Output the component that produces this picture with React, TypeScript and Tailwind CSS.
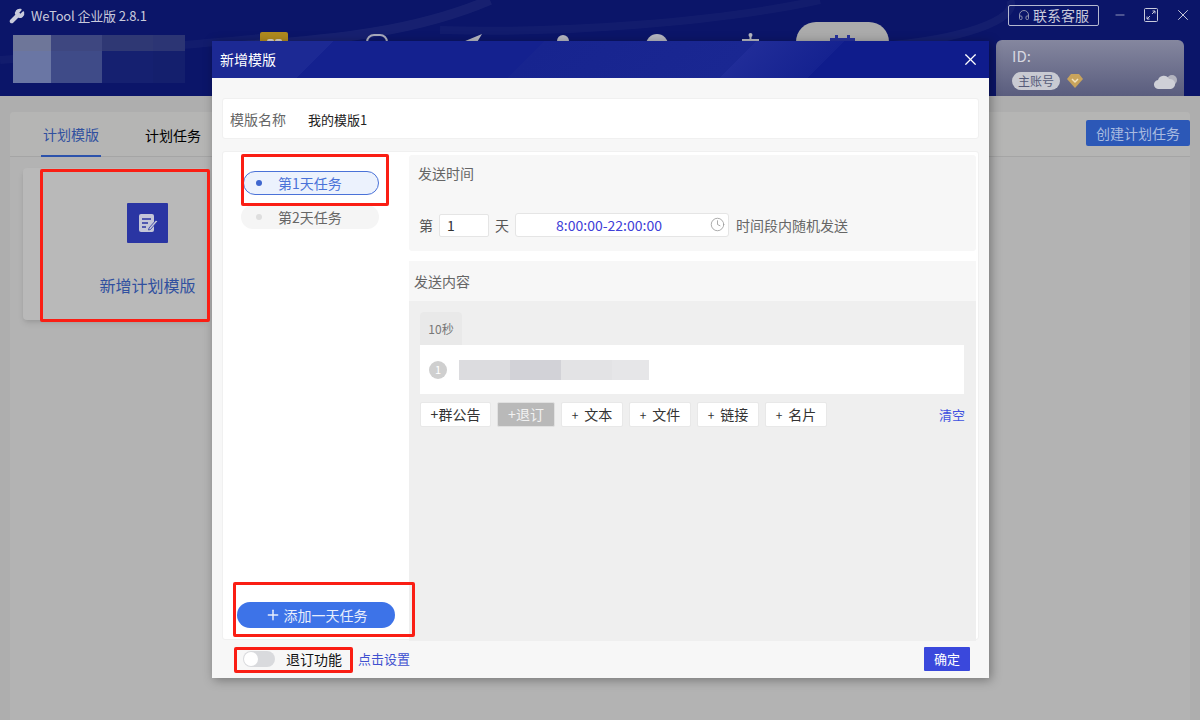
import React from "react";
import { Wrench, X, Minus, Headphones, Plus, Clock } from "lucide-react";

const btns = ["文本", "文件", "链接", "名片"];

function RedBox({ className }: { className: string }) {
  return <div className={`absolute border-[3px] border-[#fa1e14] rounded-[2px] pointer-events-none ${className}`} />;
}

function Waves() {
  return (
    <svg className="absolute inset-0" width="1200" height="96" viewBox="0 0 1200 96" fill="none">
      <path d="M240 46C340 40 420 30 490 0" stroke="#fff" strokeOpacity=".05" strokeWidth="10" />
      <path d="M440 30C560 34 720 22 820 0" stroke="#fff" strokeOpacity=".03" strokeWidth="8" />
      <path d="M880 46C960 40 1020 20 1010 0" stroke="#fff" strokeOpacity=".04" strokeWidth="8" />
      <path d="M0 60C120 50 200 44 260 38" stroke="#fff" strokeOpacity=".03" strokeWidth="8" />
    </svg>
  );
}

function NavIcons() {
  return (
    <div className="absolute left-[260px] top-[22px] flex items-start">
      <div className="mt-[10px] w-[28px] h-[26px] bg-[#b08a1e] rounded-[2px] flex justify-center gap-[1px] pt-[7px]">
        <span className="w-[7px] h-[6px] bg-[#d9d3c2] rounded-t-[2px]" />
        <span className="w-[7px] h-[6px] bg-[#d9d3c2] rounded-t-[2px]" />
      </div>
      <div className="ml-[78px] mt-[12px] w-[22px] h-[24px] border-2 border-[#a9abbd] rounded-[8px]" />
      <svg className="ml-[76px] mt-[12px]" width="18" height="18" viewBox="0 0 18 18"><path d="M18 0L0 7.500l5 3 3 6z" fill="#b5b6bf" /></svg>
      <svg className="ml-[75px] mt-[13px]" width="12" height="22" viewBox="0 0 12 22"><circle cx="6" cy="6" r="6" fill="#b5b6bf" /></svg>
      <svg className="ml-[77px] mt-[12px]" width="22" height="22" viewBox="0 0 22 22"><circle cx="11" cy="11" r="11" fill="#b5b6bf" /></svg>
      <svg className="ml-[74px] mt-[11px]" width="17" height="22" viewBox="0 0 17 22"><circle cx="8.500" cy="2" r="2" fill="#b5b6bf" /><path d="M7.500 3h2v4h-2z" fill="#b5b6bf" /><path d="M0 6h17v10H0z" fill="#b5b6bf" /></svg>
      <div className="ml-[37px] w-[93px] h-[40px] bg-[#ababab] rounded-t-[20px] flex justify-center pt-[13px]">
        <svg width="25" height="24" viewBox="0 0 25 24"><path d="M5 0h3v3h9V0h3v3h5v21H0V3h5z" fill="#27329c" /></svg>
      </div>
    </div>
  );
}

function Header() {
  return (
    <div className="relative h-[96px] bg-[#0b1569] shrink-0 overflow-hidden">
      <Waves />
      <div className="relative flex items-center h-[32px] pl-[9px] pr-[8px]">
        <Wrench className="w-[16px] h-[16px] text-[#c9cbdc]" fill="#c9cbdc" />
        <span className="ml-[6px] text-[13px] tracking-[-0.15px] text-[#c9cbdc]">WeTool 企业版 2.8.1</span>
        <div className="ml-auto flex items-center -mt-[2px]">
          <div className="w-[91px] h-[21px] border border-[#b5b8cf] rounded-[2px] flex items-center justify-center gap-[3px] text-[14px] text-[#c9cbdc]">
            <Headphones className="w-[12px] h-[12px] text-[#8f93b0]" />联系客服
          </div>
          <Minus className="ml-[14px] w-[14px] h-[14px] text-[#c9cbdc]" strokeWidth={1.2} />
          <svg className="ml-[17px]" width="14" height="14" viewBox="0 0 14 14" fill="none" stroke="#c9cbdc">
            <rect x=".5" y=".5" width="13" height="13" rx="1" />
            <path d="M3 11l3-3M3 8.500V11h2.500M11 3L8 6M8.500 3H11v2.500" />
          </svg>
          <X className="ml-[16px] w-[18px] h-[18px] text-[#c9cbdc]" strokeWidth={1.3} />
        </div>
      </div>
      <div className="absolute left-[13px] top-[35px] w-[172px] h-[48px] grid grid-cols-[38px_51px_51px_32px] grid-rows-[16px_32px]">
        <div className="bg-[#6e7699]" /><div className="bg-[#3e4780]" /><div className="bg-[#2f3874]" /><div className="bg-[#2c3574]" />
        <div className="bg-[#6a76a4]" /><div className="bg-[#3f4b88]" /><div className="bg-[#152070]" /><div className="bg-[#141f6d]" />
      </div>
      <NavIcons />
      <div className="absolute left-[996px] top-[40px] w-[188px] h-[56px] bg-gradient-to-b from-[#85879f] to-[#5a5d7e] rounded-t-[6px] text-[#d6d7e0]">
        <div className="absolute left-[16px] top-[5px] text-[15px]">ID:</div>
        <div className="absolute left-[16px] top-[32px] w-[48px] h-[18px] rounded-full bg-[#c9cad2] text-[12px] leading-[18px] text-center text-[#555a78]">主账号</div>
        <svg className="absolute left-[71px] top-[33px]" width="16" height="16" viewBox="0 0 16 16">
          <path d="M4 1h8l4 5-8 9-8-9z" fill="#c9a45c" />
          <path d="M5 6l3 3 3-3" stroke="#f3e4c0" strokeWidth="1.5" fill="none" />
        </svg>
        <svg className="absolute left-[158px] top-[33px]" width="24" height="17" viewBox="0 0 24 17">
          <circle cx="18" cy="7" r="5" fill="#b3b4bf" />
          <path d="M5 16a4.500 4.500 0 0 1-1-9 6 6 0 0 1 11-1 5 5 0 0 1 2 10z" fill="#cfd0d7" />
        </svg>
      </div>
    </div>
  );
}

function Background() {
  return (
    <div className="flex-1 bg-[#aeaeae] px-[10px] pt-[16px]">
      <div className="h-full bg-[#b3b3b3] rounded-t-[4px]">
        <div className="relative h-[45px] bg-[#b5b5b4] rounded-t-[4px] border-b border-[#a5a5a5] flex items-center text-[14px]">
          <div className="relative ml-[31px] w-[60px] h-full flex items-center justify-center pt-[1px] text-[#30509f]">
            计划模版
            <div className="absolute left-0 -bottom-px w-full h-[2px] bg-[#2c52ab]" />
          </div>
          <div className="ml-[44px] pt-[2px] text-[#000]">计划任务</div>
          <div className="absolute left-[1076px] top-[8px] w-[104px] h-[26px] bg-[#2c58b7] rounded-[2px] text-[#a9bbe0] flex items-center justify-center">创建计划任务</div>
        </div>
        <div className="relative ml-[13px] mt-[11px] w-[185px] h-[152px] bg-[#b9b9b9] rounded-[4px] shadow-md flex flex-col items-center">
          <div className="mt-[35px] ml-[64px] w-[41px] h-[40px] bg-[#2a35a3] rounded-[1px] flex items-center justify-center">
            <svg width="20" height="20" viewBox="0 0 20 20">
              <rect x="1" y="1" width="15" height="18" rx="2" fill="#c4c6d8" />
              <path d="M4 6h9M4 10h6M4 14h4" stroke="#2a35a3" strokeWidth="1.5" />
              <path d="M11 15l7-8 1.500 1.500-7 8-2 .5z" fill="#c4c6d8" stroke="#2a35a3" strokeWidth=".8" />
            </svg>
          </div>
          <div className="mt-[30px] ml-[64px] text-[16px] text-[#30509f]">新增计划模版</div>
        </div>
      </div>
    </div>
  );
}

function Modal() {
  return (
    <div className="absolute left-[212px] top-[41px] w-[777px] h-[637px] bg-[#f7f7f7] shadow-[2px_2px_10px_rgba(0,0,0,0.35)] flex flex-col">
      <div className="h-[37px] shrink-0 bg-[linear-gradient(135deg,#1c2994_0,#1c2994_86px,#14218f_86px,#14218f_235px,#17248f_235px,#1a2792_385px,#202c98_385px,#202c98_385px,#152290_447px,#0f1c8c_447px)] flex items-center pl-[8px] pr-[9px] text-[14px] text-white">
        新增模版
        <X className="ml-auto w-[19px] h-[19px]" strokeWidth={1.5} />
      </div>
      <div className="mx-[10px] mt-[20px] h-[41px] shrink-0 bg-white rounded-[3px] border border-[#f0f0f0] flex items-center pl-[7px] pt-[2px] text-[14px]">
        <span className="text-[#666]">模版名称</span>
        <span className="ml-[22px] text-[13px] text-[#222]">我的模版1</span>
      </div>
      <div className="relative mx-[10px] mt-[12px] flex-1 bg-white rounded-[3px] border border-[#f0f0f0] flex min-h-0">
        <div className="relative w-[186px] shrink-0 pl-[18px] pt-[19px] text-[14px]">
          <div className="ml-[2px] w-[136px] h-[24px] rounded-full border border-[#4a72d8] bg-[#ecf2fd] flex items-center text-[#4a72d8]">
            <span className="ml-[12px] w-[6px] h-[6px] rounded-full bg-[#3f67cf]" />
            <span className="ml-[16px]">第1天任务</span>
          </div>
          <div className="mt-[10px] w-[138px] h-[24px] rounded-full bg-[#f5f5f5] flex items-center text-[#666]">
            <span className="ml-[15px] w-[6px] h-[6px] rounded-full bg-[#dedede]" />
            <span className="ml-[16px]">第2天任务</span>
          </div>
          <div className="absolute left-[14px] bottom-[11px] w-[158px] h-[26px] rounded-full bg-[#3d73e8] text-[#e8eefc] text-[14px] flex items-center justify-center gap-[3px]">
            <Plus className="w-[16px] h-[16px]" strokeWidth={2.2} />添加一天任务
          </div>
        </div>
        <div className="flex-1 flex flex-col pr-[2px] pt-[3px] min-w-0 -mb-[2px]">
          <div className="h-[96px] shrink-0 bg-[#f7f7f7] rounded-[3px] pl-[9px] text-[14px]">
            <div className="mt-[8px] text-[#666] leading-[20px]">发送时间</div>
            <div className="ml-[1px] mt-[30px] flex items-center text-[#555]">
              <span>第</span>
              <div className="ml-[6px] w-[50px] h-[23px] bg-white border border-[#e5e5e5] rounded-[2px] flex items-center pl-[7px] text-[#333]">1</div>
              <span className="ml-[6px]">天</span>
              <div className="relative ml-[6px] w-[214px] h-[24px] bg-white border border-[#e5e5e5] rounded-[3px] flex items-center justify-center text-[#4040d8] pr-[26px]">
                8:00:00-22:00:00
                <Clock className="absolute right-[3px] top-[3px] w-[15px] h-[15px] text-[#999]" strokeWidth={1.3} />
              </div>
              <span className="ml-[7px] text-[#666]">时间段内随机发送</span>
            </div>
          </div>
          <div className="h-[40px] mt-[10px] shrink-0 bg-[#f7f7f7] pl-[5px] flex items-center text-[14px] text-[#666]">发送内容</div>
          <div className="flex-1 bg-[#efefef] pl-[11px] pr-[12px] pt-[11px]">
            <div className="w-[42px] h-[33px] bg-[#e9e9e9] rounded-t-[4px] flex items-center justify-center text-[12px] text-[#777]">10秒</div>
            <div className="h-[49px] bg-white flex items-center pl-[9px]">
              <span className="w-[18px] h-[18px] rounded-full bg-[#cfcfcf] text-white text-[11px] flex items-center justify-center">1</span>
              <div className="ml-[12px] w-[190px] h-[20px] grid grid-cols-[51px_51px_51px_37px]">
                <div className="bg-[#dcdcdf]" /><div className="bg-[#d2d2d7]" /><div className="bg-[#e3e3e5]" /><div className="bg-[#e6e6e8]" />
              </div>
            </div>
            <div className="mt-[8px] flex items-center text-[14px] text-[#333]">
              <div className="w-[71px] h-[25px] bg-white border border-[#e8e8e8] rounded-[2px] flex items-center justify-center">+群公告</div>
              <div className="ml-[6px] w-[58px] h-[25px] bg-[#b9b9b9] border border-[#e0e0e0] rounded-[2px] text-[#f2f2f2] flex items-center justify-center">+退订</div>
              {btns.map((b) => (
                <div key={b} className="ml-[6px] w-[62px] h-[25px] bg-white border border-[#e8e8e8] rounded-[2px] flex items-center justify-center gap-[6px]">
                  <span className="text-[12px]">+</span>
                  <span>{b}</span>
                </div>
              ))}
              <span className="ml-auto -mr-[1px] text-[13px] text-[#4050e0]">清空</span>
            </div>
          </div>
        </div>
      </div>
      <div className="relative h-[38px] shrink-0 flex items-center text-[14px]">
        <span className="ml-[31px] w-[32px] h-[16px] rounded-full bg-[#d9dadd] relative">
          <span className="absolute left-[1px] top-[1px] w-[14px] h-[14px] rounded-full bg-white" />
        </span>
        <span className="ml-[11px] text-[#111]">退订功能</span>
        <span className="ml-[16px] text-[13px] text-[#4050d0]">点击设置</span>
        <div className="absolute right-[19px] top-[7px] w-[46px] h-[24px] bg-[#3a48dc] rounded-[1px] text-white text-[13px] flex items-center justify-center">确定</div>
      </div>
    </div>
  );
}

export default function App() {
  return (
    <div className="relative w-[1200px] h-[720px] overflow-hidden flex flex-col font-['Noto_Sans_CJK_SC','Liberation_Sans',sans-serif]">
      <Header />
      <Background />
      <Modal />
      <RedBox className="left-[40px] top-[169px] w-[170px] h-[153px]" />
      <RedBox className="left-[241px] top-[154px] w-[148px] h-[52px]" />
      <RedBox className="left-[233px] top-[582px] w-[182px] h-[55px]" />
      <RedBox className="left-[234px] top-[647px] w-[119px] h-[26px]" />
    </div>
  );
}
